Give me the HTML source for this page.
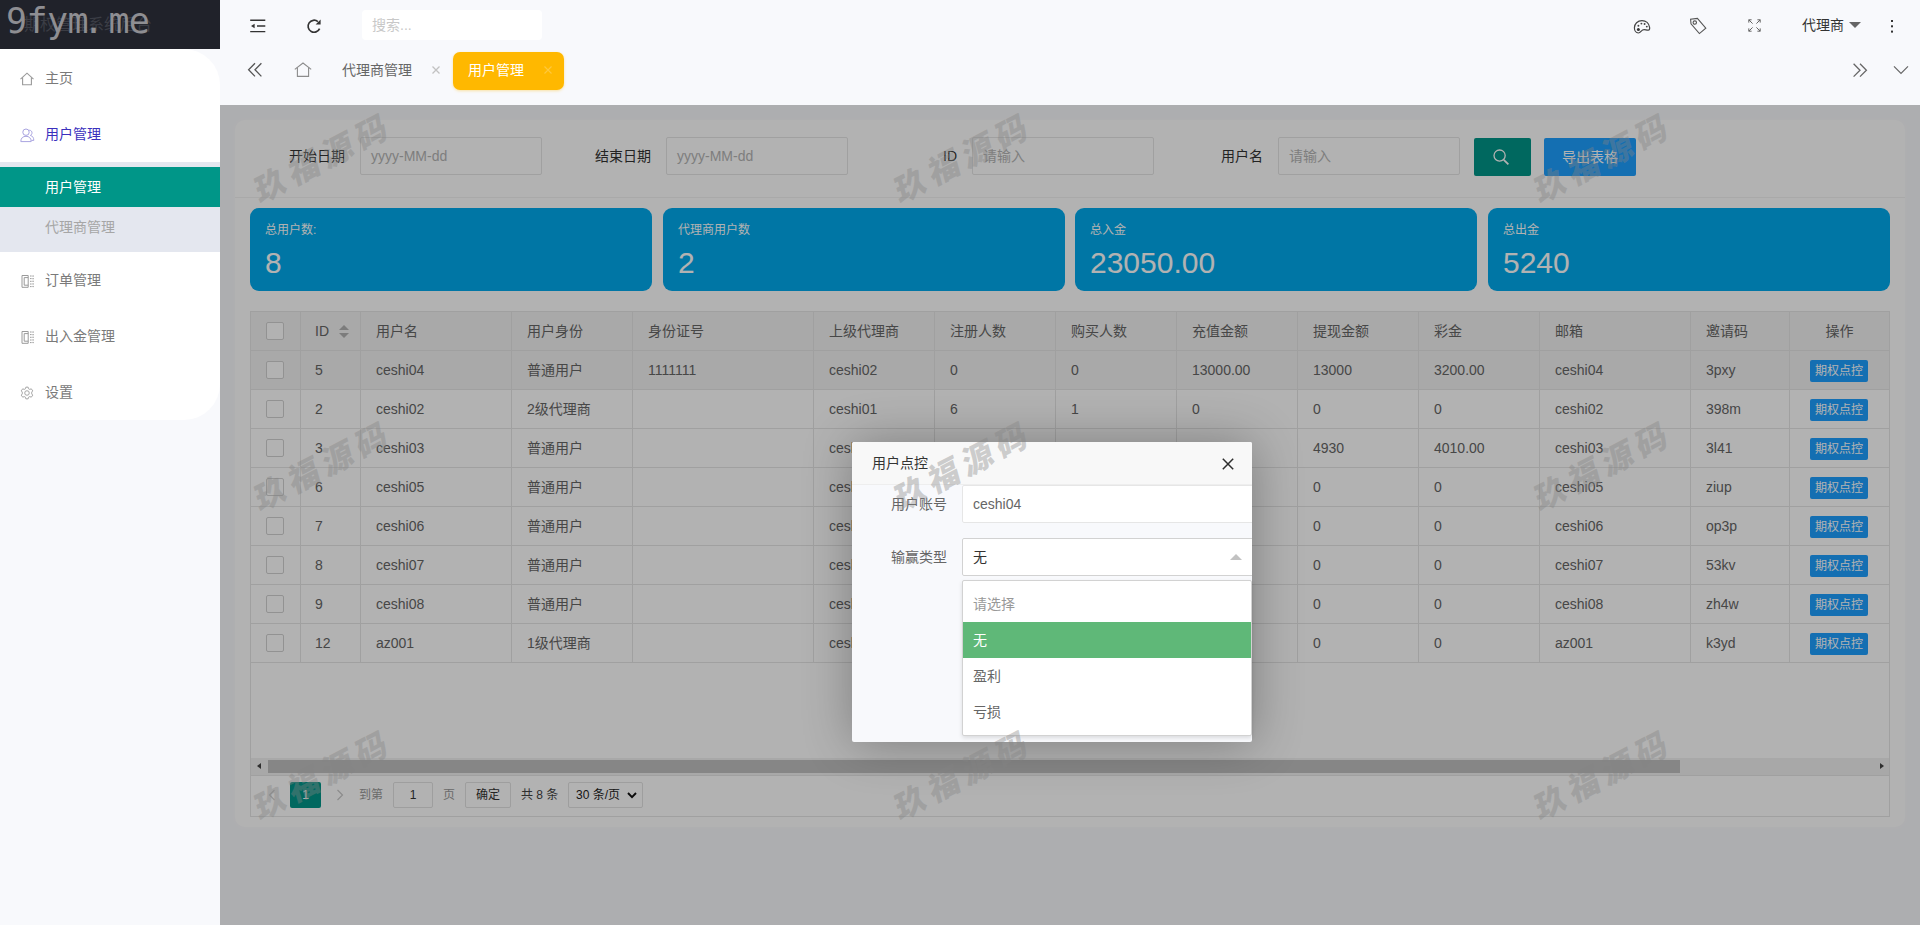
<!DOCTYPE html>
<html lang="zh-CN">
<head>
<meta charset="utf-8">
<title>用户管理</title>
<style>
*{box-sizing:border-box;margin:0;padding:0}
html,body{width:1920px;height:925px;overflow:hidden}
body{position:relative;font-family:"Liberation Sans","Noto Sans CJK SC",sans-serif;font-size:14px;color:#666;background:#f8f9fc;line-height:1}
.abs{position:absolute}
svg{display:block}
/* sidebar */
#side{position:absolute;left:0;top:0;width:220px;height:925px;background:#f8f9fc}
#logo{position:absolute;left:0;top:0;width:220px;height:49px;background:#20222a;overflow:hidden}
#logo .wm{position:absolute;left:6px;top:-3px;font-family:"DejaVu Sans Mono","Liberation Mono",monospace;font-size:35px;line-height:49px;color:#8e8e92;letter-spacing:-0.6px;white-space:nowrap}
#logo .sub{position:absolute;left:24px;top:0;line-height:49px;font-size:16px;color:#3b3d45;white-space:nowrap}
#nav{position:absolute;left:0;top:49px;width:220px;height:371px;background:#fff;border-radius:0 36px 36px 0}
.ni{position:absolute;left:0;width:220px;height:56px;line-height:56px;font-size:14px;color:#7a7a7a}
.ni span{position:absolute;left:45px;top:0;white-space:nowrap}
.ni svg{position:absolute;left:19px;top:21px}
#sub{position:absolute;left:0;top:113px;width:220px;height:90px;background:#e4e7ef}
#sub div{position:absolute;left:0;width:220px;height:40px;line-height:40px;padding-left:45px;color:#a6a6a6}
#sub .on{background:#009688;color:#fff}
/* header */
#hd{position:absolute;left:220px;top:0;width:1700px;height:105px;background:#f8f9fc}
#search{position:absolute;left:142px;top:10px;width:180px;height:30px;background:#fff;border-radius:4px;line-height:30px;padding-left:10px;color:#c8c8c8;font-size:14px}
#tabon{position:absolute;left:233px;top:52px;width:111px;height:38px;border-radius:7px;background:#ffb800;color:#fff;line-height:37px;padding-left:15px;box-shadow:0 1px 3px rgba(255,184,0,.35)}
/* content */
#ct{position:absolute;left:220px;top:105px;width:1700px;height:820px;background:#f8f9fc;overflow:hidden}
#shade{position:absolute;left:220px;top:105px;width:1700px;height:820px;background:rgba(0,0,0,.3)}
#panel{position:absolute;left:15px;top:15px;width:1670px;height:707px;background:#fff;border-radius:10px;box-shadow:0 0 5px rgba(255,255,255,.75)}
.lab{position:absolute;top:32px;height:38px;line-height:38px;width:110px;padding-right:15px;text-align:right;color:#333;white-space:nowrap}
.inp{position:absolute;top:32px;width:182px;height:38px;border:1px solid #e6e6e6;border-radius:2px;background:#fff;line-height:36px;padding-left:10px;color:#b5b5b5;white-space:nowrap}
.btn{position:absolute;top:33px;height:38px;line-height:38px;border-radius:2px;color:#fff;text-align:center;white-space:nowrap}
.stat{position:absolute;top:103px;height:83px;border-radius:9px;background:#01aaed;color:#fff}
.stat i{position:absolute;left:15px;top:15px;font-style:normal;font-size:12px;line-height:14px;white-space:nowrap}
.stat b{position:absolute;left:15px;top:37px;font-weight:normal;font-size:30px;line-height:36px;white-space:nowrap;color:#fff}
/* table */
#tb{position:absolute;left:15px;top:191px;width:1640px;height:506px;border:1px solid #e6e6e6;background:#fff}
.tr{position:absolute;left:0;width:1638px;height:39px;border-bottom:1px solid #e6e6e6}
.tr.h{background:#f2f2f2;color:#666}
.tr.hv{background:#f2f2f2}
.c{position:absolute;top:0;height:38px;line-height:38px;padding-left:15px;border-right:1px solid #e6e6e6;white-space:nowrap;overflow:hidden;color:#666;font-size:14px}
.cb{position:absolute;left:15px;top:10px;width:18px;height:18px;border:1px solid #d2d2d2;border-radius:2px;background:#fff}
.xs{position:absolute;left:20px;top:9px;width:58px;height:22px;line-height:22px;background:#1e9fff;color:#fff;font-size:12px;border-radius:2px;text-align:center}
.pt{height:26px;line-height:26px;font-size:12px;white-space:nowrap}
.c.op{background:inherit}

#modal{position:absolute;left:852px;top:442px;width:400px;height:300px;background:#f8f9fc;box-shadow:1px 1px 50px rgba(0,0,0,.3);border-radius:2px;overflow:hidden}
#mt{position:absolute;left:0;top:0;width:400px;height:43px;background:#f8f8f8;border-bottom:1px solid #eee;line-height:42px;padding-left:20px;color:#333;font-size:14px}
.ml{position:absolute;left:0;width:110px;height:38px;line-height:38px;padding-right:15px;text-align:right;color:#666;white-space:nowrap}
.mi{position:absolute;left:110px;width:292px;height:38px;border:1px solid #e6e6e6;background:#fff;line-height:36px;padding-left:10px;color:#666;border-radius:2px}
#dl{position:absolute;left:962px;top:580px;width:290px;height:156px;background:#fff;border:1px solid #d2d2d2;border-radius:2px;box-shadow:0 2px 4px rgba(0,0,0,.12);padding:5px 0}
#dl div{height:36px;line-height:36px;padding-left:10px;color:#666;white-space:nowrap}
.wk{position:absolute;width:200px;height:50px;margin:-25px 0 0 -100px;line-height:50px;text-align:center;font-size:32px;font-weight:900;letter-spacing:6px;color:rgba(132,132,132,.38);transform:rotate(-27.5deg) skewX(-12deg);white-space:nowrap;pointer-events:none;font-family:"Noto Sans CJK SC","WenQuanYi Zen Hei",sans-serif}
</style>
</head>
<body>
<div id="side">
  <div id="logo"><div class="sub">期权管理系统后台</div><div class="wm">9fym<span style="position:relative;left:-5px">.</span>me</div></div>
  <div id="nav">
    <div class="ni" style="top:1px"><svg width="16" height="16" viewBox="0 0 16 16" fill="none" stroke="#9a9a9a" stroke-width="1.1"><path d="M1.5 8.2 L8 2.2 L14.5 8.2"/><path d="M3.6 6.6 V13.8 H12.4 V6.6"/></svg><span>主页</span></div>
    <div class="ni" style="top:57px;color:#3b30bd"><svg width="16" height="16" viewBox="0 0 16 16" fill="none" stroke="#a9a4e0" stroke-width="1"><circle cx="7" cy="5.2" r="3.2"/><path d="M1.8 14.6 C1.8 11 4 9.3 7 9.3 C10 9.3 12.2 11 12.2 14.6 Z"/><path d="M10.2 3.2 C12.2 3.2 13 4.6 13 5.8 C13 7 12.4 8 11.4 8.4 C13.6 9 14.8 10.8 14.8 13.4 H12.4"/></svg><span>用户管理</span></div>
    <div id="sub"><div class="on" style="top:5px">用户管理</div><div style="top:45px">代理商管理</div></div>
    <div class="ni" style="top:203px"><svg width="16" height="16" viewBox="0 0 16 16" fill="none" stroke="#9a9a9a" stroke-width="1"><path d="M3 2.5 H9.2 V14.3 H3 Z"/><path d="M5.2 4.6 H9.2 M5.2 12.2 H9.2 M5.2 4.6 V12.2"/><path d="M11 3 H14.5 M11 5.6 H14.5 M11 8.3 H14.5 M11 11 H14.5 M11 13.6 H14.5" stroke-dasharray="1.6 1.2"/><path d="M14 2.5 V14.3" stroke-dasharray="1.2 1.4"/></svg><span>订单管理</span></div>
    <div class="ni" style="top:259px"><svg width="16" height="16" viewBox="0 0 16 16" fill="none" stroke="#9a9a9a" stroke-width="1"><path d="M3 2.5 H9.2 V14.3 H3 Z"/><path d="M5.2 4.6 H9.2 M5.2 12.2 H9.2 M5.2 4.6 V12.2"/><path d="M11 3 H14.5 M11 5.6 H14.5 M11 8.3 H14.5 M11 11 H14.5 M11 13.6 H14.5" stroke-dasharray="1.6 1.2"/><path d="M14 2.5 V14.3" stroke-dasharray="1.2 1.4"/></svg><span>出入金管理</span></div>
    <div class="ni" style="top:315px"><svg style="left:20px;top:22px" width="14" height="14" viewBox="0 0 16 16" fill="none" stroke="#9a9a9a" stroke-width="1"><circle cx="8" cy="8" r="2.6"/><path d="M6.7 1.3 H9.3 L9.7 3.1 L11.2 3.9 L12.9 3.2 L14.6 5.6 L13.4 6.9 V9.1 L14.6 10.4 L12.9 12.8 L11.2 12.1 L9.7 12.9 L9.3 14.7 H6.7 L6.3 12.9 L4.8 12.1 L3.1 12.8 L1.4 10.4 L2.6 9.1 V6.9 L1.4 5.6 L3.1 3.2 L4.8 3.9 L6.3 3.1 Z"/></svg><span>设置</span></div>
  </div>
</div>
<div id="hd">
  <svg class="abs" style="left:30px;top:18px" width="16" height="16" viewBox="0 0 16 16" fill="none" stroke="#333" stroke-width="1.4"><path d="M0.2 2.2 H15.3 M7 8 H15.3 M0.2 13.6 H15.3"/><path d="M1 8 L4.6 5.8 V10.2 Z" fill="#333" stroke="none"/></svg>
  <svg class="abs" style="left:85px;top:17px" width="18" height="18" viewBox="0 0 18 18" fill="none" stroke="#333" stroke-width="1.7"><path d="M14.6 11.6 A6 6 0 1 1 12.9 4.6"/><path d="M15.6 2.4 V7.4 H10.6 Z" fill="#333" stroke="none"/></svg>
  <div id="search">搜索...</div>
  <svg class="abs" style="left:27px;top:62px" width="16" height="16" viewBox="0 0 16 16" fill="none" stroke="#555" stroke-width="1.3"><path d="M8 1.2 L1.6 7.8 L8 14.4 M14.4 1.2 L8 7.8 L14.4 14.4"/></svg>
  <svg class="abs" style="left:74px;top:62px" width="18" height="16" viewBox="0 0 18 16" fill="none" stroke="#8c8c8c" stroke-width="1.1"><path d="M0.8 7.4 L9 1 L17.2 7.4"/><path d="M3.4 5.6 V14.4 H14.6 V5.6"/></svg>
  <div class="abs" style="left:122px;top:52px;height:37px;line-height:37px;color:#666;white-space:nowrap">代理商管理</div>
  <svg class="abs" style="left:212px;top:66px" width="8" height="8" viewBox="0 0 8 8" fill="none" stroke="#c2c2c2" stroke-width="1.3"><path d="M0.5 0.5 L7.5 7.5 M7.5 0.5 L0.5 7.5"/></svg>
  <div id="tabon">用户管理</div>
  <svg class="abs" style="left:324px;top:66px" width="8" height="8" viewBox="0 0 8 8" fill="none" stroke="#ffc83c" stroke-width="1.1"><path d="M0.5 0.5 L7.5 7.5 M7.5 0.5 L0.5 7.5"/></svg>

  <svg class="abs" style="left:1413px;top:18.5px" width="18" height="16" viewBox="0 0 18 16" fill="none" stroke="#444" stroke-width="1.2"><path d="M9 1.6 C4.6 1.6 1.4 4.8 1.4 8.8 C1.4 11.6 3 14 5.4 14 C7.6 14 7.8 12 9.6 11 C11.4 10 13.4 11.4 15.2 11.2 C16.6 11 16.8 9.6 16.6 8.4 C16 4.4 13 1.6 9 1.6 Z"/><circle cx="5.4" cy="10.6" r="1.5" fill="#333" stroke="none"/><circle cx="5.4" cy="6.8" r=".95" fill="#444" stroke="none"/><circle cx="8.4" cy="4.6" r=".95" fill="#444" stroke="none"/><circle cx="11.6" cy="5" r=".95" fill="#444" stroke="none"/><circle cx="13.8" cy="7.6" r=".95" fill="#444" stroke="none"/></svg>
  <svg class="abs" style="left:1469px;top:17px" width="18" height="18" viewBox="0 0 18 18" fill="none" stroke="#555" stroke-width="1.1"><path d="M1.6 2.2 L2 6.8 L10.4 16.6 L16.8 11.2 L8.4 1.4 Z"/><circle cx="5.8" cy="5.6" r="1.7"/></svg>
  <svg class="abs" style="left:1527.5px;top:19px" width="13" height="13" viewBox="0 0 13 13" fill="none" stroke="#666" stroke-width="1"><path d="M0.8 0.8 L4.6 4.6 M12.2 0.8 L8.4 4.6 M0.8 12.2 L4.6 8.4 M12.2 12.2 L8.4 8.4"/><path d="M0.8 3.6 V0.8 H3.6 M9.4 0.8 H12.2 V3.6 M0.8 9.4 V12.2 H3.6 M9.4 12.2 H12.2 V9.4"/></svg>
  <div class="abs" style="left:1582px;top:10px;height:30px;line-height:30px;color:#333;white-space:nowrap">代理商</div>
  <div class="abs" style="left:1629px;top:22px;width:0;height:0;border:6px solid transparent;border-top-color:#666;border-bottom:none"></div>
  <div class="abs" style="left:1671px;top:19.5px;width:2.4px;height:2.4px;background:#333;box-shadow:0 5.3px 0 #333,0 10.6px 0 #333"></div>
  <svg class="abs" style="left:1632px;top:62px" width="16" height="16" viewBox="0 0 16 16" fill="none" stroke="#666" stroke-width="1.3"><path d="M1.6 1.8 L8 8.2 L1.6 14.6 M8 1.8 L14.4 8.2 L8 14.6"/></svg>
  <svg class="abs" style="left:1673px;top:65px" width="16" height="10" viewBox="0 0 16 10" fill="none" stroke="#666" stroke-width="1.2"><path d="M1 1.4 L8 8.4 L15 1.4"/></svg>
</div>
<div id="ct"><div id="panel"><div class="lab" style="left:15px;top:17px">开始日期</div><div class="inp" style="left:125px;top:17px">yyyy-MM-dd</div>
<div class="lab" style="left:321px;top:17px">结束日期</div><div class="inp" style="left:431px;top:17px">yyyy-MM-dd</div>
<div class="lab" style="left:627px;top:17px">ID</div><div class="inp" style="left:737px;top:17px">请输入</div>
<div class="lab" style="left:933px;top:17px">用户名</div><div class="inp" style="left:1043px;top:17px">请输入</div>
<div class="btn" style="left:1239px;top:18px;width:57px;background:#009688"><svg style="position:absolute;left:17.5px;top:10px" width="18" height="18" viewBox="0 0 18 18" fill="none" stroke="#fff" stroke-width="1.3"><circle cx="7.6" cy="7.6" r="5.6"/><path d="M11.8 11.8 L16.4 16.4" stroke-width="1.8"/></svg></div>
<div class="btn" style="left:1309px;top:18px;width:92px;background:#1e9fff">导出表格</div>
<div class="abs" style="left:0;top:77px;width:1670px;height:1px;background:#f2f2f2"></div>
<div class="stat" style="left:15px;top:88px;width:402px"><i>总用户数:</i><b>8</b></div>
<div class="stat" style="left:428px;top:88px;width:402px"><i>代理商用户数</i><b>2</b></div>
<div class="stat" style="left:840px;top:88px;width:402px"><i>总入金</i><b>23050.00</b></div>
<div class="stat" style="left:1253px;top:88px;width:402px"><i>总出金</i><b>5240</b></div>
<div id="tb"><div class="tr h" style="top:0px"><div class="c" style="left:0px;width:50px;padding:0"><div class="cb"></div></div><div class="c" style="left:50px;width:60px;padding-left:14px">ID<span style="position:absolute;left:38px;top:13px;width:0;height:0;border:5px solid transparent;border-bottom-color:#b2b2b2;border-top:none"></span><span style="position:absolute;left:38px;top:20.5px;width:0;height:0;border:5px solid transparent;border-top-color:#b2b2b2;border-bottom:none"></span></div><div class="c" style="left:110px;width:151px">用户名</div><div class="c" style="left:261px;width:121px">用户身份</div><div class="c" style="left:382px;width:181px">身份证号</div><div class="c" style="left:563px;width:121px">上级代理商</div><div class="c" style="left:684px;width:121px">注册人数</div><div class="c" style="left:805px;width:121px">购买人数</div><div class="c" style="left:926px;width:121px">充值金额</div><div class="c" style="left:1047px;width:121px">提现金额</div><div class="c" style="left:1168px;width:121px">彩金</div><div class="c" style="left:1289px;width:151px">邮箱</div><div class="c" style="left:1440px;width:99px">邀请码</div><div class="c op" style="left:1538px;width:100px;border-right:none;border-left:1px solid #e6e6e6;padding:0"><div style="text-align:center">操作</div></div></div><div class="tr hv" style="top:39px"><div class="c" style="left:0px;width:50px;padding:0"><div class="cb"></div></div><div class="c" style="left:50px;width:60px;padding-left:14px">5</div><div class="c" style="left:110px;width:151px">ceshi04</div><div class="c" style="left:261px;width:121px">普通用户</div><div class="c" style="left:382px;width:181px">1111111</div><div class="c" style="left:563px;width:121px">ceshi02</div><div class="c" style="left:684px;width:121px">0</div><div class="c" style="left:805px;width:121px">0</div><div class="c" style="left:926px;width:121px">13000.00</div><div class="c" style="left:1047px;width:121px">13000</div><div class="c" style="left:1168px;width:121px">3200.00</div><div class="c" style="left:1289px;width:151px">ceshi04</div><div class="c" style="left:1440px;width:99px">3pxy</div><div class="c op" style="left:1538px;width:100px;border-right:none;border-left:1px solid #e6e6e6;padding:0"><div class="xs">期权点控</div></div></div><div class="tr " style="top:78px"><div class="c" style="left:0px;width:50px;padding:0"><div class="cb"></div></div><div class="c" style="left:50px;width:60px;padding-left:14px">2</div><div class="c" style="left:110px;width:151px">ceshi02</div><div class="c" style="left:261px;width:121px">2级代理商</div><div class="c" style="left:382px;width:181px"></div><div class="c" style="left:563px;width:121px">ceshi01</div><div class="c" style="left:684px;width:121px">6</div><div class="c" style="left:805px;width:121px">1</div><div class="c" style="left:926px;width:121px">0</div><div class="c" style="left:1047px;width:121px">0</div><div class="c" style="left:1168px;width:121px">0</div><div class="c" style="left:1289px;width:151px">ceshi02</div><div class="c" style="left:1440px;width:99px">398m</div><div class="c op" style="left:1538px;width:100px;border-right:none;border-left:1px solid #e6e6e6;padding:0"><div class="xs">期权点控</div></div></div><div class="tr " style="top:117px"><div class="c" style="left:0px;width:50px;padding:0"><div class="cb"></div></div><div class="c" style="left:50px;width:60px;padding-left:14px">3</div><div class="c" style="left:110px;width:151px">ceshi03</div><div class="c" style="left:261px;width:121px">普通用户</div><div class="c" style="left:382px;width:181px"></div><div class="c" style="left:563px;width:121px">ceshi01</div><div class="c" style="left:684px;width:121px">0</div><div class="c" style="left:805px;width:121px">0</div><div class="c" style="left:926px;width:121px">0</div><div class="c" style="left:1047px;width:121px">4930</div><div class="c" style="left:1168px;width:121px">4010.00</div><div class="c" style="left:1289px;width:151px">ceshi03</div><div class="c" style="left:1440px;width:99px">3l41</div><div class="c op" style="left:1538px;width:100px;border-right:none;border-left:1px solid #e6e6e6;padding:0"><div class="xs">期权点控</div></div></div><div class="tr " style="top:156px"><div class="c" style="left:0px;width:50px;padding:0"><div class="cb"></div></div><div class="c" style="left:50px;width:60px;padding-left:14px">6</div><div class="c" style="left:110px;width:151px">ceshi05</div><div class="c" style="left:261px;width:121px">普通用户</div><div class="c" style="left:382px;width:181px"></div><div class="c" style="left:563px;width:121px">ceshi01</div><div class="c" style="left:684px;width:121px">0</div><div class="c" style="left:805px;width:121px">0</div><div class="c" style="left:926px;width:121px">0</div><div class="c" style="left:1047px;width:121px">0</div><div class="c" style="left:1168px;width:121px">0</div><div class="c" style="left:1289px;width:151px">ceshi05</div><div class="c" style="left:1440px;width:99px">ziup</div><div class="c op" style="left:1538px;width:100px;border-right:none;border-left:1px solid #e6e6e6;padding:0"><div class="xs">期权点控</div></div></div><div class="tr " style="top:195px"><div class="c" style="left:0px;width:50px;padding:0"><div class="cb"></div></div><div class="c" style="left:50px;width:60px;padding-left:14px">7</div><div class="c" style="left:110px;width:151px">ceshi06</div><div class="c" style="left:261px;width:121px">普通用户</div><div class="c" style="left:382px;width:181px"></div><div class="c" style="left:563px;width:121px">ceshi01</div><div class="c" style="left:684px;width:121px">0</div><div class="c" style="left:805px;width:121px">0</div><div class="c" style="left:926px;width:121px">0</div><div class="c" style="left:1047px;width:121px">0</div><div class="c" style="left:1168px;width:121px">0</div><div class="c" style="left:1289px;width:151px">ceshi06</div><div class="c" style="left:1440px;width:99px">op3p</div><div class="c op" style="left:1538px;width:100px;border-right:none;border-left:1px solid #e6e6e6;padding:0"><div class="xs">期权点控</div></div></div><div class="tr " style="top:234px"><div class="c" style="left:0px;width:50px;padding:0"><div class="cb"></div></div><div class="c" style="left:50px;width:60px;padding-left:14px">8</div><div class="c" style="left:110px;width:151px">ceshi07</div><div class="c" style="left:261px;width:121px">普通用户</div><div class="c" style="left:382px;width:181px"></div><div class="c" style="left:563px;width:121px">ceshi01</div><div class="c" style="left:684px;width:121px">0</div><div class="c" style="left:805px;width:121px">0</div><div class="c" style="left:926px;width:121px">0</div><div class="c" style="left:1047px;width:121px">0</div><div class="c" style="left:1168px;width:121px">0</div><div class="c" style="left:1289px;width:151px">ceshi07</div><div class="c" style="left:1440px;width:99px">53kv</div><div class="c op" style="left:1538px;width:100px;border-right:none;border-left:1px solid #e6e6e6;padding:0"><div class="xs">期权点控</div></div></div><div class="tr " style="top:273px"><div class="c" style="left:0px;width:50px;padding:0"><div class="cb"></div></div><div class="c" style="left:50px;width:60px;padding-left:14px">9</div><div class="c" style="left:110px;width:151px">ceshi08</div><div class="c" style="left:261px;width:121px">普通用户</div><div class="c" style="left:382px;width:181px"></div><div class="c" style="left:563px;width:121px">ceshi01</div><div class="c" style="left:684px;width:121px">0</div><div class="c" style="left:805px;width:121px">0</div><div class="c" style="left:926px;width:121px">0</div><div class="c" style="left:1047px;width:121px">0</div><div class="c" style="left:1168px;width:121px">0</div><div class="c" style="left:1289px;width:151px">ceshi08</div><div class="c" style="left:1440px;width:99px">zh4w</div><div class="c op" style="left:1538px;width:100px;border-right:none;border-left:1px solid #e6e6e6;padding:0"><div class="xs">期权点控</div></div></div><div class="tr " style="top:312px"><div class="c" style="left:0px;width:50px;padding:0"><div class="cb"></div></div><div class="c" style="left:50px;width:60px;padding-left:14px">12</div><div class="c" style="left:110px;width:151px">az001</div><div class="c" style="left:261px;width:121px">1级代理商</div><div class="c" style="left:382px;width:181px"></div><div class="c" style="left:563px;width:121px">ceshi01</div><div class="c" style="left:684px;width:121px">0</div><div class="c" style="left:805px;width:121px">0</div><div class="c" style="left:926px;width:121px">0</div><div class="c" style="left:1047px;width:121px">0</div><div class="c" style="left:1168px;width:121px">0</div><div class="c" style="left:1289px;width:151px">az001</div><div class="c" style="left:1440px;width:99px">k3yd</div><div class="c op" style="left:1538px;width:100px;border-right:none;border-left:1px solid #e6e6e6;padding:0"><div class="xs">期权点控</div></div></div><div class="abs" style="left:0;top:446px;width:1638px;height:17px;background:#f1f1f1"></div><div class="abs" style="left:17px;top:448px;width:1412px;height:13px;background:#c1c1c1"></div><div class="abs" style="left:6px;top:451px;width:0;height:0;border:3.5px solid transparent;border-right:4.5px solid #444;border-left:none"></div><div class="abs" style="left:1629px;top:451px;width:0;height:0;border:3.5px solid transparent;border-left:4.5px solid #444;border-right:none"></div><div class="abs" style="left:0;top:463px;width:1638px;height:1px;background:#e6e6e6"></div>
<svg class="abs" style="left:17px;top:477px" width="8" height="12" viewBox="0 0 8 12" fill="none" stroke="#d2d2d2" stroke-width="1.2"><path d="M6.5 1 L1.5 6 L6.5 11"/></svg>
<div class="abs" style="left:39px;top:470px;width:31px;height:26px;line-height:26px;background:#009688;color:#fff;font-size:12px;text-align:center;border-radius:2px">1</div>
<svg class="abs" style="left:85px;top:477px" width="8" height="12" viewBox="0 0 8 12" fill="none" stroke="#c8c8c8" stroke-width="1.2"><path d="M1.5 1 L6.5 6 L1.5 11"/></svg>
<div class="abs pt" style="left:108px;top:470px;color:#999">到第</div>
<div class="abs" style="left:142px;top:470px;width:40px;height:26px;line-height:24px;border:1px solid #e2e2e2;border-radius:2px;text-align:center;font-size:12px;color:#333;background:#fff">1</div>
<div class="abs pt" style="left:192px;top:470px;color:#999">页</div>
<div class="abs" style="left:214px;top:470px;width:46px;height:26px;line-height:24px;border:1px solid #e2e2e2;border-radius:2px;text-align:center;font-size:12px;color:#333;background:#fff">确定</div>
<div class="abs pt" style="left:270px;top:470px;color:#444">共 8 条</div>
<div class="abs" style="left:317px;top:470px;width:75px;height:26px;line-height:24px;border:1px solid #e2e2e2;border-radius:2px;font-size:12px;color:#222;background:#fff;padding-left:7px;white-space:nowrap">30 条/页<svg style="position:absolute;left:58px;top:9px" width="10" height="7" viewBox="0 0 10 7" fill="none" stroke="#111" stroke-width="1.9"><path d="M1 1 L5 5.2 L9 1"/></svg></div>
</div></div></div>
<div id="shade"></div>
<div id="modal">
  <div id="mt">用户点控</div>
  <svg class="abs" style="left:370px;top:16px" width="12" height="12" viewBox="0 0 12 12" fill="none" stroke="#2e2e2e" stroke-width="1.5"><path d="M0.8 0.8 L11.2 11.2 M11.2 0.8 L0.8 11.2"/></svg>
  <div class="ml" style="top:43px">用户账号</div><div class="mi" style="top:43px">ceshi04</div>
  <div class="ml" style="top:96px">输赢类型</div><div class="mi" style="top:96px;border-color:#d2d2d2;color:#333">无</div>
  <div class="abs" style="left:378px;top:112px;width:0;height:0;border:6px solid transparent;border-bottom-color:#c2c2c2;border-top:none"></div>
</div>
<div id="dl"><div style="color:#999">请选择</div><div style="background:#5fb878;color:#fff">无</div><div>盈利</div><div>亏损</div></div>
<div id="wms" style="position:absolute;left:220px;top:0;width:1700px;height:925px;overflow:hidden"><div style="position:absolute;left:-220px;top:0"><div class="wk" style="left:323px;top:155px">玖福源码</div><div class="wk" style="left:963px;top:155px">玖福源码</div><div class="wk" style="left:1603px;top:155px">玖福源码</div><div class="wk" style="left:323px;top:463px">玖福源码</div><div class="wk" style="left:963px;top:463px">玖福源码</div><div class="wk" style="left:1603px;top:463px">玖福源码</div><div class="wk" style="left:323px;top:772px">玖福源码</div><div class="wk" style="left:963px;top:772px">玖福源码</div><div class="wk" style="left:1603px;top:772px">玖福源码</div></div></div>
</body>
</html>
